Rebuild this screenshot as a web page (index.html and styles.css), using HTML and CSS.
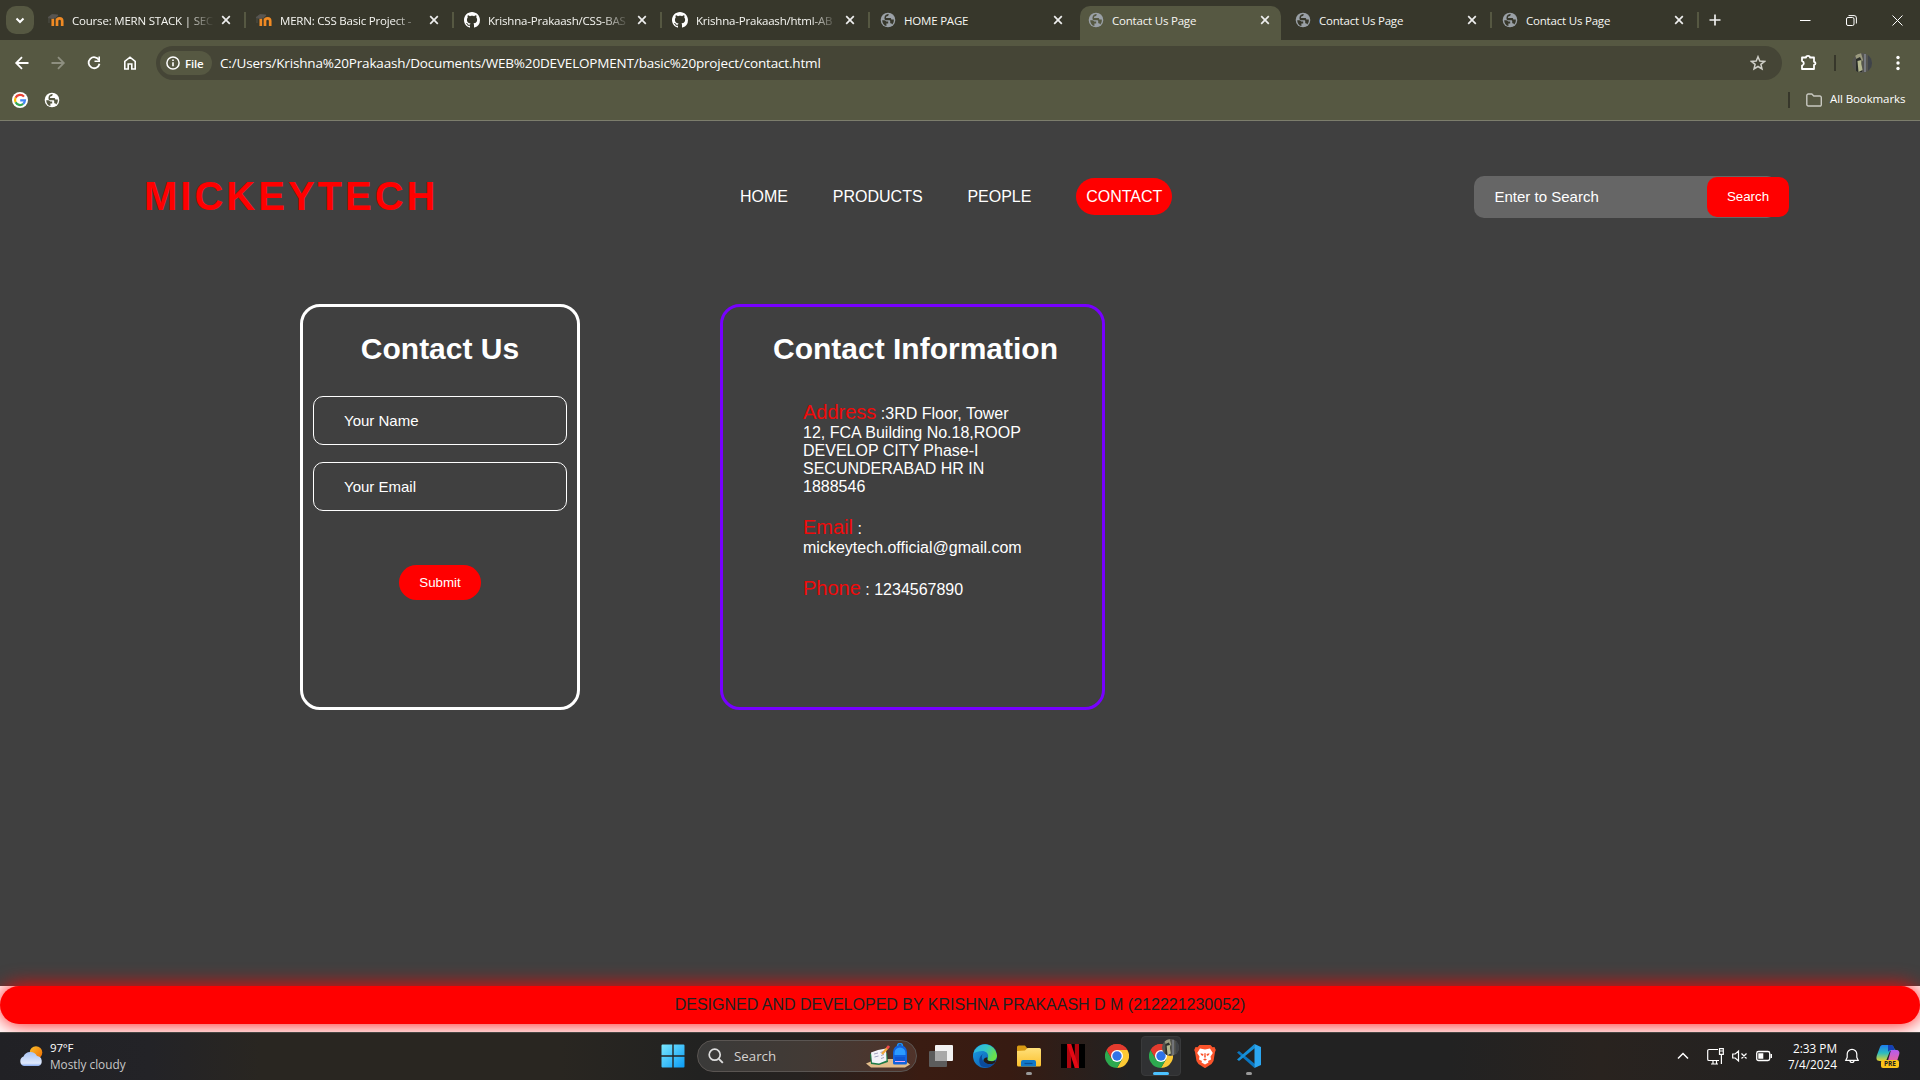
FILE: index.html
```html
<!DOCTYPE html>
<html lang="en">
<head>
<meta charset="utf-8">
<title>Contact Us Page</title>
<link rel="stylesheet" href="styles.css">
</head>
<body>
<svg class="defs" width="0" height="0" aria-hidden="true">
  <defs>
    <linearGradient id="win" x1="0" y1="0" x2="1" y2="1"><stop offset="0" stop-color="#7ae8ff"/><stop offset="1" stop-color="#0a9bf5"/></linearGradient>
    <linearGradient id="edgeA" x1="0" y1="0" x2="1" y2=".4"><stop offset="0" stop-color="#2bb3e8"/><stop offset=".55" stop-color="#34c6c8"/><stop offset="1" stop-color="#6be04a"/></linearGradient>
    <linearGradient id="edgeB" x1="0" y1="0" x2="1" y2="1"><stop offset="0" stop-color="#1aa2e6"/><stop offset="1" stop-color="#0c4fa8"/></linearGradient>
    <linearGradient id="fold" x1="0" y1="0" x2="0" y2="1"><stop offset="0" stop-color="#ffe07a"/><stop offset="1" stop-color="#fbc02d"/></linearGradient>
    <linearGradient id="cloud" x1="0" y1="0" x2="0" y2="1"><stop offset="0" stop-color="#a9c4f5"/><stop offset=".8" stop-color="#dfe9fc"/><stop offset="1" stop-color="#86aaf0"/></linearGradient>
    <linearGradient id="sun" x1="0" y1="0" x2="1" y2="1"><stop offset="0" stop-color="#fbc02d"/><stop offset="1" stop-color="#ef6c00"/></linearGradient>
    <linearGradient id="copA" x1="0" y1="0" x2="0" y2="1"><stop offset="0" stop-color="#1d7df0"/><stop offset=".5" stop-color="#2bbcc0"/><stop offset="1" stop-color="#e8d52a"/></linearGradient>
    <linearGradient id="copB" x1="0" y1="0" x2="0" y2="1"><stop offset="0" stop-color="#b35cf0"/><stop offset="1" stop-color="#f5668a"/></linearGradient>
    <symbol id="close" viewBox="0 0 10 10"><path d="M1.2 1.2l7.6 7.6M8.8 1.2L1.2 8.8" stroke="#eee" stroke-width="1.7"/></symbol>
    <symbol id="moodle" viewBox="0 0 16 16"><path d="M4.800 14V6.500M9 14V6.500M9 14V9a2.600 2.600 0 0 1 5.200 0v5" fill="none" stroke="#f08a24" stroke-width="2.700"/><path d="M0 5.500L4 2.500l6 .5-2 2.500-4 1zM1 6v5" fill="#575552" stroke="#575552" stroke-width=".8"/></symbol>
    <symbol id="github" viewBox="0 0 16 16"><path fill="#fff" d="M8 0C3.58 0 0 3.58 0 8c0 3.54 2.29 6.53 5.47 7.59.4.07.55-.17.55-.38 0-.19-.01-.82-.01-1.49-2.01.37-2.53-.49-2.69-.94-.09-.23-.48-.94-.82-1.13-.28-.15-.68-.52-.01-.53.63-.01 1.08.58 1.23.82.72 1.21 1.87.87 2.33.66.07-.52.28-.87.51-1.07-1.78-.2-3.64-.89-3.64-3.95 0-.87.31-1.59.82-2.15-.08-.2-.36-1.02.08-2.12 0 0 .67-.21 2.2.82.64-.18 1.32-.27 2-.27s1.36.09 2 .27c1.53-1.04 2.2-.82 2.2-.82.44 1.1.16 1.92.08 2.12.51.56.82 1.27.82 2.15 0 3.07-1.87 3.75-3.65 3.95.29.25.54.73.54 1.48 0 1.07-.01 1.93-.01 2.2 0 .21.15.46.55.38A8.01 8.01 0 0 0 16 8c0-4.42-3.58-8-8-8z"/></symbol>
    <symbol id="globe" viewBox="0 0 16 16"><circle cx="8" cy="8" r="7.3" fill="currentColor"/><path class="land" d="M2.2 8.2C4.600 8 5.500 8.500 6.300 9.400h1.900v2.100H6.400v2.600C3.900 13.500 2.200 11.200 2.200 8.200zM8.600 2c.2 1.300-.3 2-1.500 2.200-1 .2-1.300.8-1 1.700h4c.9 0 1.200.7 1.200 1.700h2.500c.2 2-.3 3.600-1.700 5-.2-1-.8-1.400-1.900-1.400V9.300c0-.6-.4-1-1-1H5.600L4.500 7.200V5.500C4.700 3.500 6.300 2 8.600 2z"/></symbol>
    <symbol id="chrome" viewBox="0 0 24 24"><path fill="#e33b2e" d="M12 12L1.600 6A12 12 0 0 1 22.400 6z"/><path fill="#fcc934" d="M22.400 6A12 12 0 0 1 12 24l5.200-9L12 6z"/><path fill="#2da94f" d="M1.600 6A12 12 0 0 0 12 24l5.200-9L12 12 6.800 15z"/><path fill="#e33b2e" d="M1.600 6L6.800 15 12 12V6h10.400A12 12 0 0 0 1.600 6z"/><circle cx="12" cy="12" r="6" fill="#fff"/><circle cx="12" cy="12" r="4.700" fill="#2f73e8"/></symbol>
    <symbol id="face" viewBox="0 0 20 20"><clipPath id="fc"><circle cx="10" cy="10" r="10"/></clipPath><g clip-path="url(#fc)"><path fill="#555550" d="M0 0h20v20H0z"/><path fill="#9b9a7e" d="M3 2l6-2 2 7-2 3-4-2z"/><path fill="#2b2e29" d="M4 6l4-2 2 4v11H4z"/><path fill="#b5b890" d="M5.500 8l4-1v4l1 6-4 2z"/><path fill="#777a80" d="M12 1l2 0v18h-2z"/><path fill="#3f4348" d="M16 0h4v20h-4z"/></g></symbol>
  </defs>
</svg>

<div class="tabstrip">
  <button class="tab-menu"><svg width="10" height="7" viewBox="0 0 10 7"><path d="M1.500 1.500L5 5l3.500-3.500" fill="none" stroke="#fff" stroke-width="2"/></svg></button>
  <div class="tabs">
    <div class="tab"><svg class="fav"><use href="#moodle"/></svg><span class="tab-title fade">Course: MERN STACK | SEC</span><svg class="x"><use href="#close"/></svg></div>
    <div class="tab"><svg class="fav"><use href="#moodle"/></svg><span class="tab-title fade">MERN: CSS Basic Project -</span><svg class="x"><use href="#close"/></svg></div>
    <div class="tab"><svg class="fav"><use href="#github"/></svg><span class="tab-title fade">Krishna-Prakaash/CSS-BAS</span><svg class="x"><use href="#close"/></svg></div>
    <div class="tab"><svg class="fav"><use href="#github"/></svg><span class="tab-title fade">Krishna-Prakaash/html-AB</span><svg class="x"><use href="#close"/></svg></div>
    <div class="tab plain"><svg class="fav"><use href="#globe"/></svg><span class="tab-title">HOME PAGE</span><svg class="x"><use href="#close"/></svg></div>
    <div class="tab plain active"><svg class="fav"><use href="#globe"/></svg><span class="tab-title">Contact Us Page</span><svg class="x"><use href="#close"/></svg></div>
    <div class="tab"><svg class="fav"><use href="#globe"/></svg><span class="tab-title">Contact Us Page</span><svg class="x"><use href="#close"/></svg></div>
    <div class="tab"><svg class="fav"><use href="#globe"/></svg><span class="tab-title">Contact Us Page</span><svg class="x"><use href="#close"/></svg></div>
  </div>
  <svg class="plus" width="12" height="12" viewBox="0 0 12 12"><path d="M6 .5v11M.5 6h11" stroke="#eee" stroke-width="1.700"/></svg>
  <div class="window-controls">
    <svg width="11" height="11" viewBox="0 0 11 11"><path d="M0 5.500h10.500" stroke="#fff"/></svg>
    <svg width="11" height="11" viewBox="0 0 11 11"><rect x=".5" y="2.500" width="7.500" height="8" rx="1.500" fill="none" stroke="#fff"/><path d="M2.500.6h5.500a2.300 2.300 0 0 1 2.400 2.300v5.600" fill="none" stroke="#fff"/></svg>
    <svg width="11" height="11" viewBox="0 0 11 11"><path d="M.5.5l10 10M10.500.5l-10 10" stroke="#fff"/></svg>
  </div>
</div>

<div class="browser">
  <div class="toolbar">
    <svg width="20" height="20" viewBox="0 0 20 20"><path d="M16.500 10H4.500M10 4.200L4.200 10l5.800 5.800" fill="none" stroke="#fff" stroke-width="1.800"/></svg>
    <svg width="20" height="20" viewBox="0 0 20 20"><path d="M3.500 10h12M10 4.200l5.800 5.800-5.800 5.800" fill="none" stroke="#8e8f80" stroke-width="1.800"/></svg>
    <svg width="20" height="20" viewBox="0 0 20 20"><path d="M15 7.200A5.500 5.500 0 1 0 15.500 10.800" fill="none" stroke="#fff" stroke-width="1.800"/><path d="M16 3.500V9h-5.500V7.400h3.900V3.500z" fill="#fff"/></svg>
    <svg width="20" height="20" viewBox="0 0 20 20"><path d="M4.800 16V8.400L10 4.200l5.200 4.200V16h-3.400v-5H8.200v5z" fill="none" stroke="#fff" stroke-width="1.600"/></svg>
    <div class="omnibox">
      <span class="chip"><svg width="14" height="14" viewBox="0 0 14 14"><circle cx="7" cy="7" r="6.100" fill="none" stroke="#fff" stroke-width="1.500"/><path d="M7 6.200v4M7 3.600v1.500" stroke="#fff" stroke-width="1.600"/></svg>File</span>
      <span class="url">C:/Users/Krishna%20Prakaash/Documents/WEB%20DEVELOPMENT/basic%20project/contact.html</span>
      <svg class="star" width="16" height="16" viewBox="0 0 16 16"><path d="M8 1.700l1.800 4.300 4.700.4-3.600 3 1.100 4.600-4-2.500L4 14l1.100-4.600-3.600-3 4.700-.4z" fill="none" stroke="#cfcfc8" stroke-width="1.500"/></svg>
    </div>
    <svg width="20" height="20" viewBox="0 0 20 20"><path d="M4 4.500h4a2 1.700 0 0 1 4 0h4v4.300a1.500 1.500 0 0 1 0 3V16H4v-3.400a2.300 2.300 0 0 0 0-4.500z" fill="none" stroke="#fff" stroke-width="1.800" stroke-linejoin="round"/></svg>
    <span class="divider"></span>
    <svg width="20" height="20"><use href="#face"/></svg>
    <svg width="20" height="20" viewBox="0 0 20 20" fill="#fff"><circle cx="10" cy="4.500" r="1.700"/><circle cx="10" cy="10" r="1.700"/><circle cx="10" cy="15.500" r="1.700"/></svg>
  </div>
  <div class="bookmarks">
    <svg width="16" height="16" viewBox="0 0 16 16"><circle cx="8" cy="8" r="8" fill="#fff"/><g fill="none" stroke-width="2.200"><path d="M12 4.600A5 5 0 0 0 3.600 5.700" stroke="#ea4335"/><path d="M3.600 5.700a5 5 0 0 0 0 4.600" stroke="#fbbc05"/><path d="M3.600 10.300A5 5 0 0 0 11.200 11.900" stroke="#34a853"/><path d="M11.200 11.900A5 5 0 0 0 13 8.300H8.200" stroke="#4285f4"/></g></svg>
    <svg class="globe-mark" width="16" height="16"><use href="#globe"/></svg>
    <span class="divider push"></span>
    <svg class="folder" width="16" height="14" viewBox="0 0 16 14"><path d="M.8 11.500v-9A1.500 1.500 0 0 1 2.300 1h3.500l2 2h6a1.500 1.500 0 0 1 1.500 1.500v7a1.300 1.300 0 0 1-1.500 1.500h-11.500a1.500 1.500 0 0 1-1.500-1.500z" fill="none" stroke="#c8c8c0" stroke-width="1.400"/></svg>
    <span class="all">All Bookmarks</span>
  </div>
</div>

<div class="page">
  <header class="site-header">
    <div class="logo">MICKEYTECH</div>
    <nav class="nav"><a>HOME</a><a>PRODUCTS</a><a>PEOPLE</a><a class="current">CONTACT</a></nav>
    <div class="search"><span class="search-field">Enter to Search</span><button class="search-btn">Search</button></div>
  </header>
  <main class="cards">
    <section class="card form-card">
      <h1>Contact Us</h1>
      <div class="field">Your Name</div>
      <div class="field">Your Email</div>
      <button class="submit">Submit</button>
    </section>
    <section class="card info-card">
      <h1>Contact Information</h1>
      <p><span class="label">Address</span> :3RD Floor, Tower<br>12, FCA Building No.18,ROOP<br>DEVELOP CITY Phase-I<br>SECUNDERABAD HR IN<br>1888546</p>
      <p><span class="label">Email</span> :<br>mickeytech.official@gmail.com</p>
      <p><span class="label">Phone</span> : 1234567890</p>
    </section>
  </main>
</div>
<div class="footer-wrap"><footer class="footer">DESIGNED AND DEVELOPED BY KRISHNA PRAKAASH D M (212221230052)</footer></div>

<div class="taskbar">
  <div class="weather">
    <svg width="24" height="21" viewBox="0 0 24 21"><circle cx="17" cy="6.500" r="6.300" fill="url(#sun)"/><path d="M5 20a5 5 0 0 1-.5-9.500A7.500 7.500 0 0 1 18 10a5.200 5.200 0 0 1 1.500 10z" fill="url(#cloud)"/></svg>
    <div><div class="temp">97°F</div><div class="sky">Mostly cloudy</div></div>
  </div>
  <div class="apps">
    <div class="app"><svg width="24" height="24" viewBox="0 0 24 24"><path fill="url(#win)" d="M.5 1.500a1 1 0 0 1 1-1h9.800v10.800H.5zM12.700.5h9.800a1 1 0 0 1 1 1v9.800H12.700zM.5 12.700h10.800v10.800H1.500a1 1 0 0 1-1-1zM12.700 12.700h10.800v9.800a1 1 0 0 1-1 1h-9.800z"/></svg></div>
    <div class="task-search">
      <svg width="16" height="16" viewBox="0 0 16 16"><circle cx="6.700" cy="6.700" r="5.500" fill="none" stroke="#ddd" stroke-width="1.700"/><path d="M10.800 10.800l4 4" stroke="#ddd" stroke-width="1.900"/></svg>
      <span>Search</span>
      <svg class="art" width="46" height="26" viewBox="0 0 46 26"><path fill="#e3bd8b" d="M1 20.500L12 16h26l7 5.500-5 3H6z"/><path fill="#1d7a46" d="M5 11l8-3 9 2 1 9-9 3-8-1z"/><path fill="#f3f3f8" d="M6 9.500l7-2.500 8-1.500.5 12-7.500 3-7-1z"/><path d="M9 11l4-1M9.500 14l4-1M15.500 9.500l3-1M16 12.500l3-1M16 15.500l3-1" stroke="#9a9ab8" stroke-width=".9"/><path d="M17 11l5.500-6" stroke="#f0a63a" stroke-width="2.400"/><path d="M22 5.500l2-2.500" stroke="#ef4b4b" stroke-width="2.800"/><path fill="#1263dd" d="M28 20V9a7 7 0 0 1 14 0v11a1.500 1.500 0 0 1-1.500 1.500h-11A1.500 1.500 0 0 1 28 20z"/><path d="M32.500 3a2.500 2.500 0 0 1 5 0" fill="none" stroke="#1b8df5" stroke-width="1.500"/><path fill="#2b9bff" d="M29.500 10a5.500 5.500 0 0 1 11 0v2h-11z"/><path fill="#0f55d0" d="M30 14h10v4H30z"/><path d="M30 18.500h10" stroke="#e6a8f5"/></svg>
    </div>
    <div class="app"><svg width="24" height="22" viewBox="0 0 24 22"><rect x="6" width="18" height="16" rx="1" fill="#f2f2f2"/><rect y="6" width="18" height="16" rx="1" fill="#5c5c5c"/><path fill="#a9a9a9" d="M6 6h12v10H6z"/></svg></div>
    <div class="app"><svg width="24" height="24" viewBox="0 0 24 24"><circle cx="12" cy="12" r="12" fill="url(#edgeB)"/><path fill="url(#edgeA)" d="M.4 9.500A12 12 0 0 1 24 11.500c0 3.500-2.500 5.700-5.500 5.700-2.700 0-4.200-1-4.200-2 0-.8.900-1.200.9-2.900 0-2.700-2.400-5.200-6-5.200-3.500 0-6.500 1-8.800 2.400z"/><path fill="#0b4a9c" d="M8.500 22.300c-3-3-3.300-9 1.200-12.200-1.300 2.300-1.100 5 .7 7.200 2.400 3 7.200 3.800 11.300 1.700A12 12 0 0 1 8.500 22.300z"/><path fill="#231b16" d="M14.300 15.300c0 1 1.500 2 4.200 2 1.900 0 3.300-.6 4.200-1.400-.2 1.300-.7 2.300-1.200 3-4 2.200-9 1.200-11-1.900 0-2 1-3.300 3.800-3.700.3.700.3 1.400 0 2z"/></svg></div>
    <div class="app running"><svg width="24" height="24" viewBox="0 0 24 24"><path fill="#d99a12" d="M0 3a1.500 1.500 0 0 1 1.500-1.500H8L10 4v3H0z"/><path fill="url(#fold)" d="M0 7l8-.5 2.500-2.500h12A1.500 1.500 0 0 1 24 5.500V21a1.500 1.500 0 0 1-1.500 1.500h-21A1.500 1.500 0 0 1 0 21z"/><path fill="#1279c9" d="M4 22.500V18a2 2 0 0 1 2-2h11a2 2 0 0 1 2 2v4.500z"/><path d="M7.500 19.500h8" stroke="#0a4f94" stroke-width="1.300"/></svg></div>
    <div class="app"><svg width="24" height="24" viewBox="0 0 24 24"><path d="M0 0h24v24H0z"/><path fill="#b1060f" d="M6 0h4.200v24L6 24zM13.800 0H18v24h-4.200z"/><path fill="#e50914" d="M6 0h4.200L18 24h-4.200z"/></svg></div>
    <div class="app"><svg width="24" height="24"><use href="#chrome"/></svg></div>
    <div class="app focused"><svg width="24" height="24"><use href="#chrome"/></svg><svg class="badge" width="17" height="17"><use href="#face"/></svg></div>
    <div class="app"><svg width="22" height="24" viewBox="0 0 22 24"><path fill="#fb542b" d="M5.500 1h11l2 2.200 2-.2 1.300 3-.8 2-1.500 9-2 3L11 24.200 4.500 20l-2-3L1 8 .2 6l1.300-3 2 .2z"/><path fill="#fff" d="M6 4.500l5 1 5-1 2.800 4.500-2.300 3.500.5 3-3 1.500.5 1.500L11 20.500 7.500 18.500 8 17l-3-1.500.5-3L3.200 9z"/><path fill="#fb542b" d="M6.500 9.200l3 .8-.5 2-2-1zM15.500 9.200l-3 .8.5 2 2-1zM10.500 9h1l.4 4.500h-1.800zM9 15.300l2-.8 2 .8-2 1.400z"/></svg></div>
    <div class="app running"><svg width="24" height="24" viewBox="0 0 24 24"><path fill="#0a76c0" d="M0 8.500L2 7l16 13-.5 4z"/><path fill="#1690d8" d="M0 15.500L2 17 18 4l-.5-4z"/><path fill="#2ba6f0" d="M17.500 0L24 3v18l-6.500 3z"/></svg></div>
  </div>
  <div class="tray">
    <svg width="16" height="16" viewBox="0 0 16 16"><path d="M3 10.500l5-5 5 5" fill="none" stroke="#fff" stroke-width="1.500"/></svg>
    <svg class="net" width="17" height="17" viewBox="0 0 17 17" fill="none" stroke="#fff" stroke-width="1.200"><path d="M11 1.500H2A1.300 1.300 0 0 0 .7 2.800v8.400A1.300 1.300 0 0 0 2 12.500h10M4 16h7M6 12.500V16M9.500 12.500V16M12.500.7h3.800v5.600h-3.800zM14.400 6.500V16M12.500 3h3.800"/></svg>
    <svg width="16" height="16" viewBox="0 0 16 16" fill="none" stroke="#fff" stroke-width="1.200"><path d="M.7 6v4h2.500l3.300 3V3L3.200 6zM9.500 5.500l5 5M14.500 5.500l-5 5"/></svg>
    <svg width="17" height="16" viewBox="0 0 17 16"><rect x=".7" y="3.500" width="13" height="9" rx="1.800" fill="none" stroke="#fff" stroke-width="1.300"/><path fill="#fff" d="M2.300 5.200h5v5.600h-5zM14.500 6h1.500v4h-1.500z"/></svg>
    <div class="clock">2:33 PM<br>7/4/2024</div>
    <svg class="bell" width="16" height="16" viewBox="0 0 16 16" fill="none" stroke="#fff" stroke-width="1.200"><path d="M8 1.300a4.800 4.800 0 0 0-4.800 4.800v3.200L1.800 12.300h12.400l-1.400-3V6.100A4.800 4.800 0 0 0 8 1.300zM6 12.500a2 2 0 0 0 4 0"/></svg>
    <div class="copilot"><svg width="24" height="22" viewBox="0 0 24 22"><path fill="url(#copA)" d="M7 0h8c3 0 3 5 5 5l-6 1-4 10H4c-4 0-4-3-3-6l3-8c.6-1.400 1.500-2 3-2z"/><path fill="#163fb5" d="M12 0h3c2 0 3 2 3.700 5H15c-1.500 0-2.500 1-3 2z"/><path fill="url(#copB)" d="M15 5h5c3 0 4 2 3 5l-3 9h-9z"/></svg><span class="pre">PRE</span></div>
  </div>
</div>
</body>
</html>
```
FILE: styles.css
```css
* { box-sizing: border-box; }
body {
  margin: 0;
  width: 1920px;
  height: 1080px;
  overflow: hidden;
  display: flex;
  flex-direction: column;
  background: #fff;
  font-family: "Liberation Sans", Arial, sans-serif;
}
svg { display: block; flex: none; }
button { border: 0; padding: 0; font-family: inherit; color: #fff; }
.defs { position: absolute; }

/* Tab strip */
.tabstrip {
  height: 40px;
  flex: none;
  display: flex;
  align-items: center;
  background: #37372b;
  font-family: "Open Sans", "Noto Sans", sans-serif;
  padding-left: 6px;
}
.tab-menu {
  width: 28px;
  height: 28px;
  margin-right: 3px;
  border-radius: 10px;
  background: #565842;
  display: flex;
  align-items: center;
  justify-content: center;
}
.tabs { display: grid; grid-template-columns: repeat(5, 208px) repeat(3, 207px); align-self: stretch; }
.tab {
  position: relative;
  display: flex;
  align-items: center;
  padding: 0 14px 0 11px;
  color: #f6f6f2;
  --land: #37372b;
}
.tab::after {
  content: "";
  position: absolute;
  right: -1px;
  top: 12px;
  width: 2px;
  height: 16px;
  background: #565842;
}
.tab.plain::after { display: none; }
.fav { width: 16px; height: 16px; color: #9aa0a6; }
.land { fill: var(--land); }
.tab-title {
  width: 146px;
  margin-left: 8px;
  font-size: 11.5px;
  letter-spacing: -0.2px;
  white-space: nowrap;
}
.fade { mask-image: linear-gradient(to right, #000 114px, transparent 142px); }
.x { width: 10px; height: 10px; margin-left: auto; }
.active { --land: #565842; }
.active::before {
  content: "";
  position: absolute;
  left: 3px;
  right: 3px;
  top: 6px;
  bottom: 0;
  background: #565842;
  border-radius: 10px 10px 0 0;
}
.active > * { position: relative; }
.plus { margin-left: 11px; }
.window-controls { margin-left: auto; margin-right: 17px; display: flex; gap: 35px; }

/* Toolbar and bookmarks */
.browser {
  height: 81px;
  flex: none;
  background: #565842;
  border-bottom: 1px solid #7c7d6c;
  font-family: "Open Sans", "Noto Sans", sans-serif;
  color: #fff;
}
.toolbar { height: 46px; display: flex; align-items: center; gap: 16px; padding: 0 12px; }
.omnibox {
  flex: 1;
  height: 34px;
  border-radius: 17px;
  background: #454536;
  display: flex;
  align-items: center;
  padding: 0 16px 0 4px;
}
.chip {
  height: 24px;
  width: 52px;
  border-radius: 12px;
  background: #565842;
  display: flex;
  align-items: center;
  gap: 5px;
  padding-left: 6px;
  font-size: 11.5px;
  font-weight: 600;
  letter-spacing: -0.2px;
}
.url { margin-left: 8px; font-size: 13.5px; letter-spacing: -0.17px; white-space: nowrap; }
.star { margin-left: auto; }
.divider { width: 2px; height: 16px; background: #37372b; }
.bookmarks { height: 28px; display: flex; align-items: center; padding: 0 14px 0 12px; }
.globe-mark { margin-left: 16px; color: #fff; --land: #565842; }
.push { margin-left: auto; }
.folder { margin: 0 8px 0 16px; }
.all { width: 76px; font-size: 11.5px; line-height: 16px; margin-bottom: 2px; letter-spacing: -0.1px; white-space: nowrap; }

/* Web page */
.page { height: 865px; flex: none; background: #404040; color: #fff; }
.site-header { height: 151px; display: flex; align-items: center; padding: 0 131px 0 144px; }
.logo { width: 596px; font-size: 40px; font-weight: bold; letter-spacing: 3px; color: #f00; }
.nav { display: flex; align-items: center; gap: 44.800px; font-size: 16px; }
.current { background: #f00; border-radius: 19px; padding: 9.500px 10px; }
.search { margin-left: auto; display: flex; align-items: center; }
.search-field {
  width: 303px;
  height: 42px;
  line-height: 41px;
  padding-left: 20.500px;
  margin-right: -70px;
  border-radius: 10px;
  background: #666;
  font-size: 15px;
}
.search-btn { width: 82px; height: 40px; border-radius: 10px; background: #f00; font-size: 13.333px; position: relative; }
.cards { display: flex; gap: 140px; padding: 32px 0 0 300px; }
.card { height: 406px; border: 3px solid #fff; border-radius: 20px; }
.card h1 { margin: 0; font-size: 30px; line-height: 34px; text-align: center; }
.form-card { width: 280px; display: flex; flex-direction: column; align-items: center; padding-top: 25px; }
.field {
  width: 254px;
  height: 49px;
  line-height: 47px;
  padding-left: 30px;
  margin-top: 17px;
  border: 1px solid #fff;
  border-radius: 10px;
  font-size: 15px;
}
.form-card h1 { margin-bottom: 13px; }
.submit { width: 82px; height: 35px; margin-top: 54px; border-radius: 18px; background: #f00; font-size: 13.333px; }
.info-card { width: 385px; border-color: #70f; padding: 25px 0 0 80px; font-size: 16px; }
.info-card h1 { margin: 0 0 35px -30px; width: 285px; white-space: nowrap; }
.info-card p { margin: 0 0 20px; white-space: nowrap; }
.label { font-size: 20px; color: #f00a0a; }
.footer-wrap { height: 46px; flex: none; }
.footer {
  height: 38px;
  line-height: 37px;
  border-radius: 20px;
  background: #f00;
  box-shadow: 0 0 20px #f00;
  text-align: center;
  font-size: 16px;
  color: #222;
}

/* Taskbar */
.taskbar {
  position: relative;
  height: 48px;
  flex: none;
  display: grid;
  grid-template-columns: 651px auto 1fr;
  align-items: center;
  border-top: 1px solid #464644;
  padding-bottom: 1px;
  background: linear-gradient(to right, #212125 0, #232327 150px, #292621 260px, #292621 560px, #222221 700px, #262220 800px, #3a1c12 920px, #371b12 1010px, #222 1130px, #222 1450px, #29231f 1600px, #242221 1750px, #202022);
  font-family: "Open Sans", "Noto Sans", sans-serif;
  color: #fff;
}
.weather { display: flex; align-items: center; gap: 7px; padding-left: 19px; font-size: 11.8px; line-height: 16px; }
.temp { font-size: 11.5px; letter-spacing: -0.2px; }
.sky { color: #c8c8c8; }
.apps { display: flex; align-items: center; }
.app { position: relative; width: 44px; height: 40px; display: flex; align-items: center; justify-content: center; }
.app::before { content: ""; position: absolute; }
.app > svg { position: relative; }
.running::before { left: 19px; top: 36px; width: 6px; height: 3px; border-radius: 2px; background: #999; }
.focused::before { inset: 0 2px; border-radius: 4px; background: #303133; border: 1px solid #393a3b; }
.focused::after { content: ""; position: absolute; left: 14px; top: 36px; width: 16px; height: 3px; border-radius: 2px; background: #4cc2ff; }
.app > .badge { position: absolute; left: 23px; top: 3px; }
.task-search {
  width: 220px;
  height: 32px;
  margin: 0 2px;
  padding: 0 5px 0 10px;
  border-radius: 16px;
  border: 1px solid #5a5552;
  background: linear-gradient(to right, #3a3a39, #423a35 50%, #50332a);
  display: flex;
  align-items: center;
  gap: 10px;
  font-size: 13.300px;
  color: #d5d2d0;
}
.art { margin-left: auto; }
.tray { display: flex; align-items: center; justify-content: flex-end; padding-right: 20px; }
.net { margin-left: 16px; margin-right: 8px; }
.tray svg:nth-child(3) { margin-right: 8px; }
.clock { width: 64px; text-align: right; font-size: 11.8px; line-height: 16px; }
.bell { margin: 0 16px 0 7px; }
.copilot { position: relative; width: 24px; height: 22px; }
.pre {
  position: absolute;
  left: 5px;
  top: 15px;
  width: 18px;
  height: 8px;
  border-radius: 2px;
  background: #fcc419;
  color: #222;
  font-size: 6.500px;
  font-weight: 700;
  line-height: 8px;
  text-align: center;
}
```
